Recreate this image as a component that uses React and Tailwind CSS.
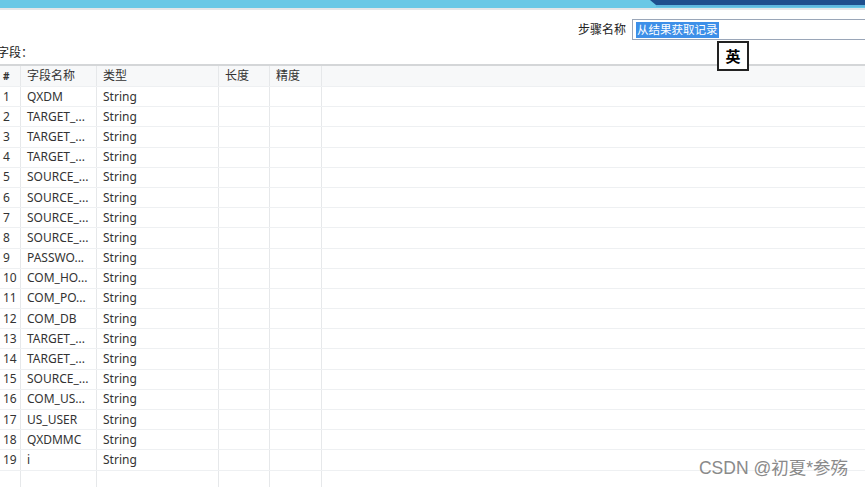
import React from "react";

const rows = [
  "QXDM","TARGET_...","TARGET_...","TARGET_...","SOURCE_...","SOURCE_...","SOURCE_...","SOURCE_...","PASSWO...","COM_HO...","COM_PO...","COM_DB","TARGET_...","TARGET_...","SOURCE_...","COM_US...","US_USER","QXDMMC","i",
];

const cols = "grid-cols-[21px_76px_122px_51px_52px_1fr]";

function Row({ cells, header }) {
  return (
    <div className={`grid ${cols} ${header ? "h-[21px] bg-[#f7f8f9]" : "h-[20.2px]"} border-b border-[#eef0f2]`}>
      {cells.map((c, i) => (
        <div
          key={i}
          className={`flex items-center overflow-hidden whitespace-nowrap ${i < 5 ? "border-r border-[#e6e8ea]" : ""} ${i === 0 ? "pl-[3px]" : "pl-[6px]"}`}
        >
          {c}
        </div>
      ))}
    </div>
  );
}

export default function App() {
  return (
    <div
      className="relative w-[865px] h-[487px] overflow-hidden bg-white text-[12px] text-[#333]"
      style={{ fontFamily: "'Noto Sans', 'Noto Sans CJK SC', sans-serif" }}
    >
      {/* top title strip */}
      <div className="relative h-[8px] bg-[#69c8e6]">
        <svg className="absolute right-0 top-0" width="215" height="8" viewBox="0 0 215 8">
          <polygon points="0,0 215,0 215,5 6,5" fill="#1e4f8e" />
          <rect x="6" y="5" width="209" height="2" fill="#5fb8e0" />
        </svg>
      </div>
      <div className="h-[2px] bg-[#e4e6e8]" />

      {/* step name */}
      <div className="flex items-start justify-end pt-[9px] h-[32px] -mr-[8px]">
        <span className="mt-[2px] mr-[6px] text-[12px] text-[#222]">步骤名称</span>
        <div className="w-[241px] h-[21px] border border-[#9aa6b8] bg-white flex items-center pl-[3px]">
          <span className="bg-[#3d8fe8] text-white text-[11.5px] leading-[16px] px-[1px]">从结果获取记录</span>
        </div>
      </div>

      {/* fields label */}
      <div className="h-[22px] flex items-center -ml-[3px] text-[#222]">字段：</div>

      {/* table */}
      <div className="border-t-2 border-[#d4d6d8]">
        <Row
          header
          cells={[
            <span className="text-[10px] font-bold leading-none">#</span>,
            "字段名称",
            "类型",
            "长度",
            "精度",
            "",
          ]}
        />
        {rows.map((r, i) => (
          <Row key={i} cells={[i + 1, r, "String", "", "", ""]} />
        ))}
        <Row cells={["", "", "", "", "", ""]} />
      </div>

      {/* IME indicator */}
      <div className="absolute left-[717px] top-[41px] w-[32px] h-[30px] border-2 border-[#222] bg-white flex items-center justify-center text-[15px] font-bold text-black">
        英
      </div>

      {/* watermark */}
      <div
        className="absolute right-[17px] top-[455px] text-[17.5px] text-[#8a8a8a]"
        style={{ fontFamily: "'Liberation Sans', 'Noto Sans CJK SC', sans-serif" }}
      >
        CSDN @初夏*参殇
      </div>
    </div>
  );
}
